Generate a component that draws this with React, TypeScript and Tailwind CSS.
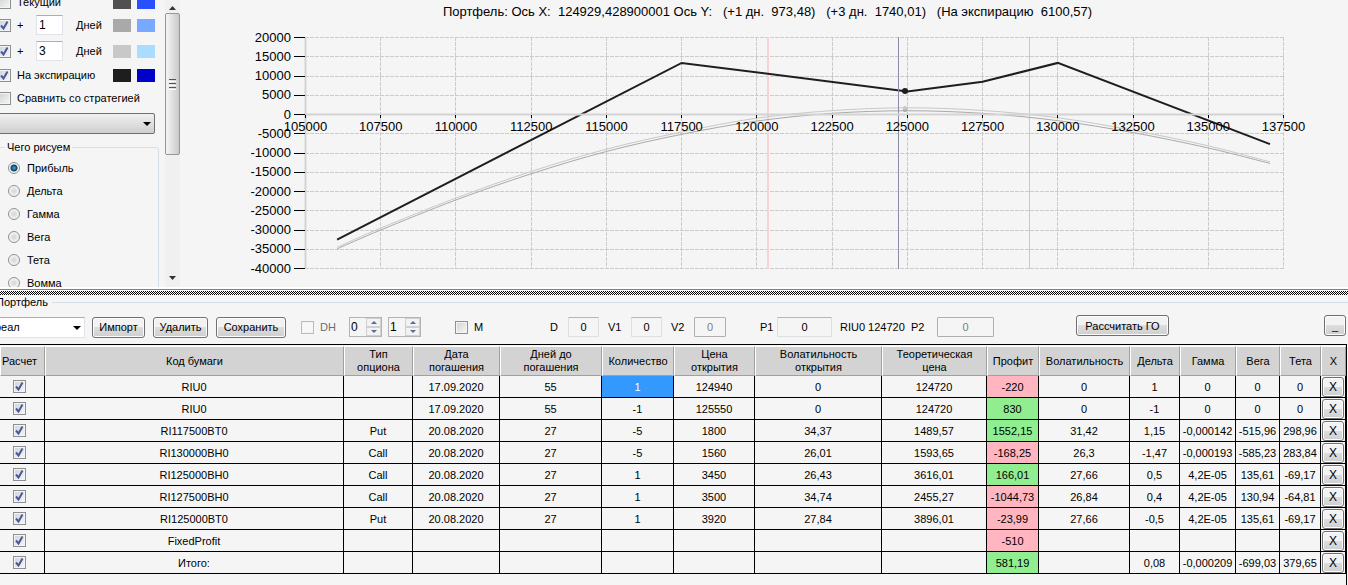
import { useState } from 'react';
import type { ReactNode } from 'react';

const greeks = ['Прибыль', 'Дельта', 'Гамма', 'Вега', 'Тета', 'Вомма'];

const columns = [
    { title: 'Расчет', width: 'w-[45px] pr-1.5' },
    { title: 'Код бумаги', width: '' },
    { title: 'Тип\nопциона', width: 'w-[69px]' },
    { title: 'Дата\nпогашения', width: 'w-[87px]' },
    { title: 'Дней до\nпогашения', width: 'w-[102px]' },
    { title: 'Количество', width: 'w-[72px]' },
    { title: 'Цена\nоткрытия', width: 'w-[81px]' },
    { title: 'Волатильность\nоткрытия', width: 'w-[127px]' },
    { title: 'Теоретическая\nцена', width: 'w-[105px]' },
    { title: 'Профит', width: 'w-[52px]' },
    { title: 'Волатильность', width: 'w-[91px]' },
    { title: 'Дельта', width: 'w-[50px]' },
    { title: 'Гамма', width: 'w-[56px]' },
    { title: 'Вега', width: 'w-[44px]' },
    { title: 'Тета', width: 'w-[41px]' },
    { title: 'X', width: 'w-[25px]' },
];

const QTY = 4;
const PROFIT = 8;

const rows = [
    ['RIU0', '', '17.09.2020', '55', '1', '124940', '0', '124720', '-220', '0', '1', '0', '0', '0'],
    ['RIU0', '', '17.09.2020', '55', '-1', '125550', '0', '124720', '830', '0', '-1', '0', '0', '0'],
    ['RI117500BT0', 'Put', '20.08.2020', '27', '-5', '1800', '34,37', '1489,57', '1552,15', '31,42', '1,15', '-0,000142', '-515,96', '298,96'],
    ['RI130000BH0', 'Call', '20.08.2020', '27', '-5', '1560', '26,01', '1593,65', '-168,25', '26,3', '-1,47', '-0,000193', '-585,23', '283,84'],
    ['RI125000BH0', 'Call', '20.08.2020', '27', '1', '3450', '26,43', '3616,01', '166,01', '27,66', '0,5', '4,2E-05', '135,61', '-69,17'],
    ['RI127500BH0', 'Call', '20.08.2020', '27', '1', '3500', '34,74', '2455,27', '-1044,73', '26,84', '0,4', '4,2E-05', '130,94', '-64,81'],
    ['RI125000BT0', 'Put', '20.08.2020', '27', '1', '3920', '27,84', '3896,01', '-23,99', '27,66', '-0,5', '4,2E-05', '135,61', '-69,17'],
    ['FixedProfit', '', '', '', '', '', '', '', '-510', '', '', '', '', ''],
    ['Итого:', '', '', '', '', '', '', '', '581,19', '', '0,08', '-0,000209', '-699,03', '379,65'],
];

// [price, profit]
const expiration = [[106050, -32500], [117500, 13400], [125000, 6000], [127500, 8500], [130000, 13400], [137050, -7700]];
const plusOne = [
    [106050, -34900], [107500, -30000], [110000, -22200], [112500, -15400], [115000, -9600], [117500, -5150], [120000, -1700],
    [122500, 300], [125000, 973], [127500, 300], [130000, -1600], [132500, -4700], [135000, -8700], [137050, -12700],
];
const plusThree = [
    [106050, -34500], [107500, -29500], [110000, -21700], [112500, -14800], [115000, -9000], [117500, -4550], [120000, -950],
    [122500, 1000], [125000, 1740], [127500, 1050], [130000, -850], [132500, -4100], [135000, -8150], [137050, -12300],
];

const px = (price: number) => 124.5 + ((price - 105000) * 978) / 32500;
const py = (profit: number) => 13.5 + ((20000 - profit) * 231) / 60000;

const line = (points: number[][]) => points.map(([a, b]) => `${px(a)},${py(b)}`).join(' ');

const curve = (points: number[][]) => {
    const p = points.map(([a, b]) => [px(a), py(b)]);
    let d = `M${p[0]}`;
    for (let i = 0; i < p.length - 1; i++) {
        const prev = p[i - 1] ?? p[i];
        const next = p[i + 2] ?? p[i + 1];
        const c1 = [p[i][0] + (p[i + 1][0] - prev[0]) / 6, p[i][1] + (p[i + 1][1] - prev[1]) / 6];
        const c2 = [p[i + 1][0] - (next[0] - p[i][0]) / 6, p[i + 1][1] - (next[1] - p[i][1]) / 6];
        d += `C${c1} ${c2} ${p[i + 1]}`;
    }
    return d;
};

const Chart = () => {
    const xTicks = Array.from({ length: 14 }, (_, i) => 105000 + i * 2500);
    const yTicks = Array.from({ length: 13 }, (_, i) => 20000 - i * 5000);
    const snap = (v: number) => Math.floor(v) + 0.5;

    return (
        <svg viewBox="0 0 1167 264" className="block h-auto w-full">
            <g stroke="#cccccc" strokeDasharray="4 1">
                {xTicks.map(t => <line key={t} x1={snap(px(t))} x2={snap(px(t))} y1="13" y2="245" />)}
                {yTicks.map(t => <line key={t} x1="124" x2="1103" y1={snap(py(t))} y2={snap(py(t))} />)}
            </g>
            <path d="M587 13V245" stroke="#fbd0d7" strokeWidth="2" />
            <path d="M848.5 13V245" stroke="#ffb0bc" />
            <path d={curve(plusOne)} fill="none" stroke="#a9a9a9" />
            <path d={curve(plusThree)} fill="none" stroke="#c8c8c8" />
            <polyline points={line(expiration)} fill="none" stroke="#1e1e1e" strokeWidth="2" />
            <path d="M717.5 13V245" stroke="#8c8ca4" />
            <circle cx="724" cy="86" r="2" fill="#a9a9a9" />
            <circle cx="724" cy="84" r="2" fill="#c8c8c8" />
            <circle cx="724" cy="67" r="3" fill="#1e1e1e" />
            <path d="M124.5 13V245" stroke="#d3d3d3" strokeWidth="2" />
            <path d="M124 90.5H1103" stroke="#d3d3d3" strokeWidth="2" />
            <g stroke="#000">
                {xTicks.map(t => <line key={t} x1={snap(px(t))} x2={snap(px(t))} y1="91" y2="94" />)}
                {yTicks.map(t => <line key={t} x1="113" x2="124" y1={snap(py(t))} y2={snap(py(t))} />)}
            </g>
            <g className="fill-black text-[13px]">
                {xTicks.map(t => <text key={t} x={px(t)} y="107" textAnchor="middle">{t}</text>)}
                {yTicks.map(t => <text key={t} x="110" y={py(t) + 4} textAnchor="end">{t}</text>)}
            </g>
        </svg>
    );
};

const Check = ({ id, label, checked = false, disabled = false }: { id?: string; label?: string; checked?: boolean; disabled?: boolean }) => {
    const [on, setOn] = useState(checked);
    return (
        <span className="relative block h-[13px] w-[13px] shrink-0">
            <input
                id={id}
                type="checkbox"
                aria-label={label}
                checked={on}
                disabled={disabled}
                onChange={() => setOn(!on)}
                className="block h-[13px] w-[13px] appearance-none border border-[#8e8f8f] bg-linear-to-br from-[#cfd3d8] to-[#f7f7f7] shadow-[inset_0_0_0_1px_#f4f4f4] disabled:border-[#bcbcbc] disabled:from-[#f8f8f8]"
            />
            {on && (
                <svg viewBox="0 0 13 13" className="pointer-events-none absolute inset-0 h-[13px] w-[13px]">
                    <path d="M3 6.5 L5.5 9.5 L9.5 2.5" fill="none" stroke="#4a5a97" strokeWidth="2" />
                </svg>
            )}
        </span>
    );
};

const Caret = () => (
    <svg viewBox="0 0 8 4" className="pointer-events-none absolute top-[9px] right-1 h-1 w-2">
        <path d="M0 0H8L4 4Z" fill="#000" />
    </svg>
);

const Button = ({ className = 'h-[21px]', children }: { className?: string; children: ReactNode }) => (
    <button
        className={`shrink-0 rounded-[3px] border border-[#707070] bg-linear-to-b from-[#f2f2f2] from-50% via-[#dddddd] via-50% to-[#cfcfcf] text-center leading-[18px] shadow-[inset_0_0_0_1px_#fcfcfc] ${className}`}
    >
        {children}
    </button>
);

const Swatches = ({ a, b }: { a: string; b: string }) => (
    <span className="ml-auto flex gap-1.5">
        <span className={`h-[13px] w-[18px] ${a}`} />
        <span className={`h-[13px] w-[18px] ${b}`} />
    </span>
);

const DaysRow = ({ id, days, height, children }: { id: string; days: string; height: string; children: ReactNode }) => (
    <div className={`flex items-center ${height}`}>
        <Check id={id} checked />
        <label htmlFor={id} className="ml-1.5 w-[19px]">+</label>
        <input defaultValue={days} aria-label="Количество дней" className="h-5 w-[27px] border border-[#e2e3ea] border-t-[#abadb3] bg-white px-0.5 text-xs" />
        <span className="ml-[13px]">Дней</span>
        {children}
    </div>
);

const Spinner = ({ value, label }: { value: string; label: string }) => (
    <div className="flex h-5 w-[33px] shrink-0 border border-[#b4b4b4]">
        <input defaultValue={value} aria-label={label} className="w-4 min-w-0 px-px text-xs" />
        <div className="flex flex-1 flex-col">
            {['M0 3H6L3 0Z', 'M0 0H6L3 3Z'].map((d, i) => (
                <button key={d} aria-label={i ? 'Меньше' : 'Больше'} className="flex flex-1 items-center justify-center border border-[#d0d0d0] bg-[#f2f2f2]">
                    <svg viewBox="0 0 6 3" className="h-[3px] w-1.5"><path d={d} fill="#5a6a9c" /></svg>
                </button>
            ))}
        </div>
    </div>
);

const Field = ({ id, label, labelWidth, width, disabled = false }: { id: string; label: string; labelWidth: string; width: string; disabled?: boolean }) => (
    <div className="flex shrink-0 items-center">
        <label htmlFor={id} className={labelWidth}>{label}</label>
        <input
            id={id}
            defaultValue="0"
            disabled={disabled}
            className={`h-5 rounded-[1px] border border-[#dcdfe3] border-t-[#b4b6ba] text-center disabled:border-[#afafaf] disabled:text-[#7d7d7d] ${width}`}
        />
    </div>
);

const ScrollBar = () => (
    <div className="flex w-[15px] flex-col items-center bg-[#f0f0f0] pt-1.5 pb-[7px]">
        <svg viewBox="0 0 7 4" className="h-1 w-[7px] shrink-0"><path d="M0 4H7L3.5 0Z" fill="#333" /></svg>
        <div className="mt-[3px] flex h-[142px] w-full shrink-0 flex-col items-center justify-center gap-px rounded-[2px] border border-[#979797] bg-linear-to-r from-[#f5f5f5] to-[#c9c9c9]">
            <span className="h-px w-[7px] bg-[#555]" />
            <span className="h-px w-[7px] bg-[#fff]" />
            <span className="h-px w-[7px] bg-[#555]" />
            <span className="h-px w-[7px] bg-[#fff]" />
            <span className="h-px w-[7px] bg-[#555]" />
            <span className="h-px w-[7px] bg-[#fff]" />
        </div>
        <svg viewBox="0 0 7 4" className="mt-auto h-1 w-[7px] shrink-0"><path d="M0 0H7L3.5 4Z" fill="#333" /></svg>
    </div>
);

const SidePanel = () => {
    const [greek, setGreek] = useState('Прибыль');
    return (
        <aside className="flex h-[287px] w-[181px] shrink-0 overflow-hidden">
            <div className="-mt-[9px] -ml-0.5 w-[157px] shrink-0">
                <div className="flex h-[22px] items-center">
                    <Check id="current" />
                    <label htmlFor="current" className="ml-1.5">Текущий</label>
                    <Swatches a="bg-[#505050]" b="bg-[#2850ff]" />
                </div>
                <DaysRow id="plus1" days="1" height="h-6">
                    <Swatches a="bg-[#a9a9a9]" b="bg-[#78a8ff]" />
                </DaysRow>
                <DaysRow id="plus3" days="3" height="h-7">
                    <Swatches a="bg-[#c8c8c8]" b="bg-[#aadcff]" />
                </DaysRow>
                <div className="flex h-5 items-center">
                    <Check id="expiration" checked />
                    <label htmlFor="expiration" className="ml-1.5">На экспирацию</label>
                    <Swatches a="bg-[#1e1e1e]" b="bg-[#0000c8]" />
                </div>
                <div className="flex h-[26px] items-center">
                    <Check id="compare" />
                    <label htmlFor="compare" className="ml-1.5 whitespace-nowrap">Сравнить со стратегией</label>
                </div>
                <div className="relative mt-[2px] h-[21px]">
                    <select aria-label="Стратегия" className="block h-full w-full appearance-none rounded-[2px] border border-[#707070] bg-linear-to-b from-[#f0f0f0] to-[#cfcfcf]">
                        <option></option>
                    </select>
                    <Caret />
                </div>
                <fieldset className="mt-1.5 mr-[-4px] h-[170px] rounded-[3px] border border-[#d5dfe5] pl-[9px]">
                    <legend className="-ml-[3px] px-0.5 leading-[14px]">Чего рисуем</legend>
                    <div className="pt-0.5">
                        {greeks.map(g => (
                            <label key={g} className="flex h-[23px] items-center gap-[7px]">
                                <input
                                    type="radio"
                                    name="greek"
                                    checked={greek === g}
                                    onChange={() => setGreek(g)}
                                    className="h-3 w-3 appearance-none rounded-full border border-[#8e8f8f] bg-[radial-gradient(circle,#d9dbdd_20%,#f7f7f7_70%)] checked:bg-[radial-gradient(circle,#2f8fc0_0_1px,#123a5c_3px,#f4f4f4_4px)]"
                                />
                                {g}
                            </label>
                        ))}
                    </div>
                </fieldset>
            </div>
            <div className="ml-auto flex pr-px">
                <ScrollBar />
            </div>
        </aside>
    );
};

const Toolbar = () => (
    <div className="flex h-[35px] items-center pt-px pr-0.5">
        <div className="relative -ml-2.5 h-[21px] w-[95px] shrink-0">
            <select aria-label="Портфель" className="block h-full w-full appearance-none border border-[#e2e3ea] border-t-[#abadb3] bg-white pl-1">
                <option>реал</option>
            </select>
            <Caret />
        </div>
        <Button className="ml-[7px] h-[21px] w-[53px]">Импорт</Button>
        <Button className="ml-2 h-[21px] w-[55px]">Удалить</Button>
        <Button className="ml-2 h-[21px] w-[70px]">Сохранить</Button>
        <div className="ml-[15px] flex w-12 shrink-0 items-center gap-1.5 text-[#6d6d6d]">
            <Check id="dh" disabled />
            <label htmlFor="dh">DH</label>
        </div>
        <div className="flex gap-1.5">
            <Spinner value="0" label="DH от" />
            <Spinner value="1" label="DH до" />
        </div>
        <div className="ml-[34px] flex w-[95px] shrink-0 items-center gap-1.5">
            <Check id="m" />
            <label htmlFor="m">M</label>
        </div>
        <div className="flex gap-[9px]">
            <Field id="d" label="D" labelWidth="w-[18px]" width="w-[31px]" />
            <Field id="v1" label="V1" labelWidth="w-[23px]" width="w-[31px]" />
            <Field id="v2" label="V2" labelWidth="w-[23px]" width="w-8" disabled />
        </div>
        <div className="ml-[34px] flex items-center gap-2">
            <Field id="p1" label="P1" labelWidth="w-[17px]" width="w-[55px]" />
            <span className="w-[63px] whitespace-nowrap">RIU0 124720</span>
            <Field id="p2" label="P2" labelWidth="w-[26px]" width="w-[57px]" disabled />
        </div>
        <Button className="mb-[3px] ml-[82px] h-[21px] w-[93px]">Рассчитать ГО</Button>
        <Button className="mb-[3px] ml-auto h-[21px] w-[22px]">_</Button>
    </div>
);

const cellColor = (row: number, col: number, value: string) => {
    if (row === 0 && col === QTY) return 'bg-[#3399ff] text-white';
    if (col === PROFIT) return value.startsWith('-') ? 'bg-[#ffb6c1]' : 'bg-[#90ee90]';
    return '';
};

const Positions = () => (
    <table className="w-full table-fixed border-separate border-spacing-0 text-center">
        <thead>
            <tr className="h-[30px]">
                {columns.map((c, i) => (
                    <th
                        key={i}
                        className={`border-t border-r border-b border-l border-t-white border-r-[#a0a0a0] border-b-[#a0a0a0] border-l-white bg-[#d3d3d3] py-0 leading-[13px] font-normal whitespace-pre-line ${c.width}`}
                    >
                        {c.title}
                    </th>
                ))}
            </tr>
        </thead>
        <tbody>
            {rows.map((row, r) => (
                <tr key={r} className="h-[22px]">
                    <td className="border-r border-b border-black p-0">
                        <div className="flex justify-center pr-1.5">
                            <Check label={row[0]} checked />
                        </div>
                    </td>
                    {row.map((value, c) => (
                        <td key={c} className={`border-r border-b border-black p-0 leading-[14px] whitespace-nowrap ${cellColor(r, c, value)}`}>
                            {value}
                        </td>
                    ))}
                    <td className="border-r border-b border-black p-0">
                        <Button className="mx-auto block h-5 w-[22px] text-xs">X</Button>
                    </td>
                </tr>
            ))}
        </tbody>
    </table>
);

const App = () => (
    <div className="flex min-h-screen flex-col overflow-hidden bg-[#f5f5f5] font-['Liberation_Sans',Arial,sans-serif] text-[11px] leading-[14px] text-black">
        <div className="flex">
            <SidePanel />
            <section className="min-w-0 flex-1">
                <h1 className="h-6 pt-1 pl-1.5 text-center text-[13px] leading-4 whitespace-pre">
                    {'Портфель: Ось X:  124929,428900001 Ось Y:   (+1 дн.  973,48)   (+3 дн.  1740,01)   (На экспирацию  6100,57)'}
                </h1>
                <Chart />
            </section>
        </div>
        <div className="-mt-px h-0.5 bg-white" />
        <div className="h-px bg-[#808080]" />
        <div className="mt-px h-1 bg-[repeating-conic-gradient(#000_0_25%,#fff_0_50%)] bg-[length:2px_2px]" />
        <section className="flex flex-1 flex-col">
            <div className="flex items-center gap-1">
                <h2 className="-ml-1 leading-[14px]">Портфель</h2>
                <div className="h-px flex-1 bg-[#d5dfe5]" />
            </div>
            <Toolbar />
            <div className="mr-px flex-1 border-t border-r border-black pt-px">
                <Positions />
            </div>
        </section>
    </div>
);

export default App;
